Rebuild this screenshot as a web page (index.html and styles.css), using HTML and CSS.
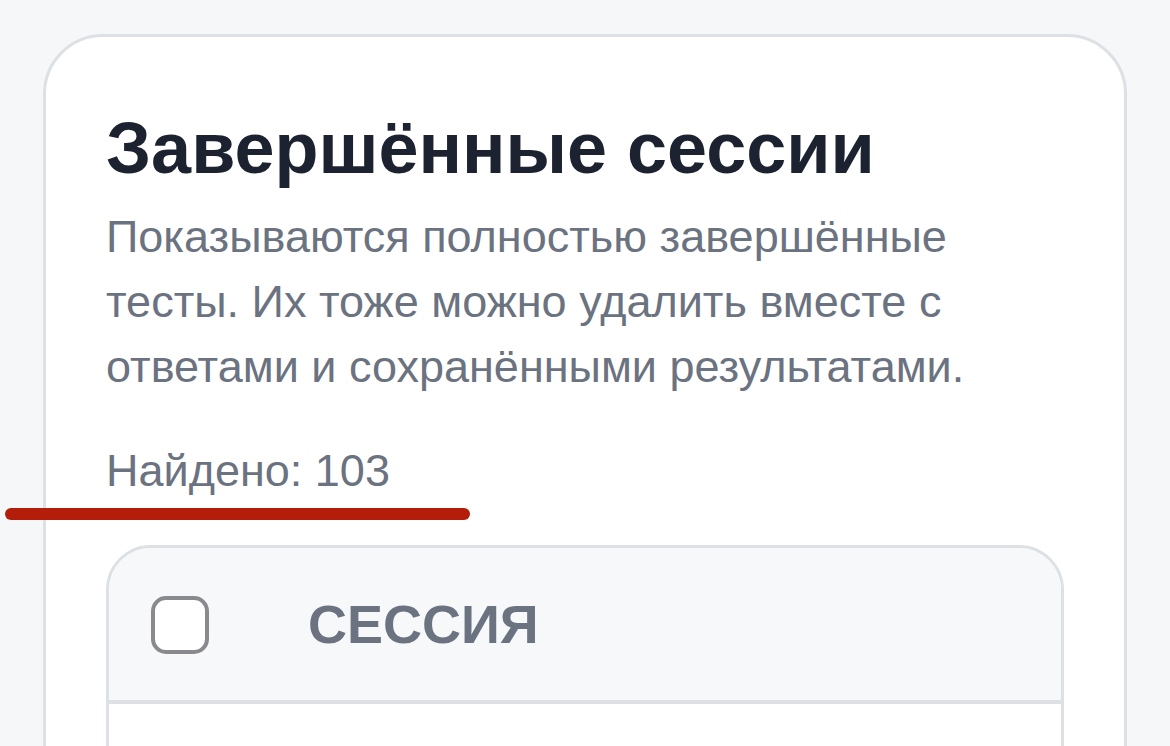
FILE: index.html
```html
<!DOCTYPE html>
<html lang="ru">
<head>
    <meta charset="UTF-8">
    <meta name="viewport" content="width=device-width, initial-scale=1.0">
    <title>Завершённые сессии</title>
    <link rel="stylesheet" href="styles.css">
</head>
<body>
    <div class="page">
        <section class="card">
            <h1 class="card-title">Завершённые сессии</h1>
            <p class="card-text">Показываются полностью завершённые тесты. Их тоже можно удалить вместе с ответами и сохранёнными результатами.</p>
            <p class="found">Найдено: 103</p>

            <div class="table-wrap">
                <div class="table-head">
                    <span class="check"></span>
                    <span class="col-title">Сессия</span>
                </div>
                <div class="table-body"></div>
            </div>
        </section>
    </div>
    <div class="mark"></div>
</body>
</html>
```

FILE: styles.css
```css
html, body {
    margin: 0;
    background: #f6f7f9;
    font-family: "Liberation Sans", Arial, sans-serif;
    overflow: hidden;
}
.page {
    padding: 34px 43px 0;
}
.card {
    background: #fff;
    border: 3px solid #dde0e5;
    border-radius: 60px;
    padding: 67px 60px 0;
    min-height: 800px;
}
.card-title {
    margin: 0;
    font-size: 72px;
    line-height: 88px;
    font-weight: bold;
    color: #1c2230;
}
.card-text {
    max-width: 900px;
    margin: 12px 0 0;
    font-size: 45px;
    line-height: 65px;
    color: #6b7280;
}
.found {
    margin: 39px 0 0;
    font-size: 45px;
    line-height: 65px;
    color: #6b7280;
}
.table-wrap {
    margin-top: 42px;
    border: 3px solid #dde0e5;
    border-radius: 45px;
    overflow: hidden;
}
.table-head {
    display: flex;
    align-items: center;
    height: 152px;
    padding: 0 42px;
    background: #f7f8fa;
    border-bottom: 4px solid #dde0e5;
}
.check {
    width: 50px;
    height: 50px;
    border: 4px solid #8a8a8e;
    border-radius: 15px;
    background: #fff;
    margin-top: 2px;
}
.col-title {
    margin-left: 99px;
    font-size: 54px;
    font-weight: bold;
    text-transform: uppercase;
    color: #6b7280;
}
.table-body {
    height: 200px;
    background: #fff;
}
.mark {
    position: absolute;
    left: 5px;
    top: 508px;
    width: 465px;
    height: 12px;
    border-radius: 6px;
    background: #b41d09;
}
```
